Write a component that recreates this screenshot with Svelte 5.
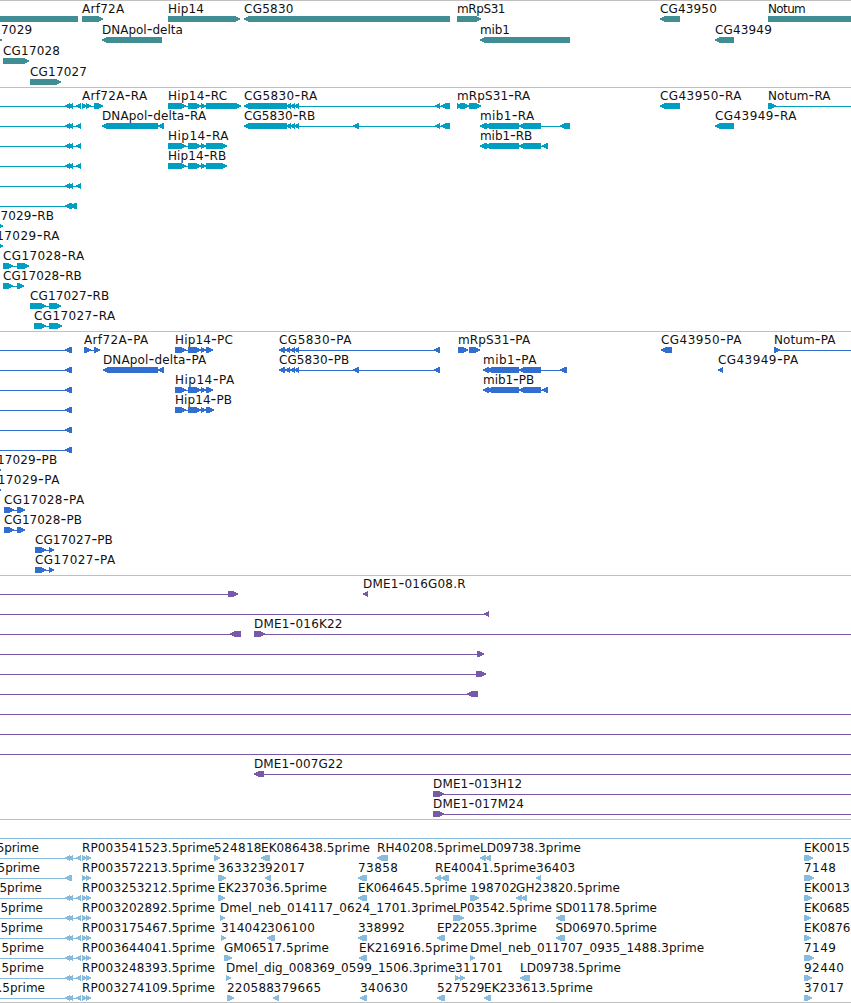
<script>
  // Glyph notation: a-b intron line, a=b plain block, a>b / a<b stranded exon.
  // Labels are [start, text, end].
  const end5 = '65<70 68<73 76<81';
  const est = '0-81 ' + end5 + ' 82>87 86>91';
  const row = (g = '', ...labels) => ({ g, labels });
  const hip = '168-206 168>186 188>201 201>206 ';
  const hipP = '175-206 175>186 188>201 201>206 ';
  const cg = '244-450 244<287 286<291 290<295 294<299 435<440 441<450 ';
  const cgP = '279-440 279<285 285<290 290<295 294<299 434<440 ';
  const mib = '480<487 485<519 519<541 ';
  const mibP = '483<489 487<519 519<541 ';

  const tracks = [
    { name: 'gene', rows: [
      row('0=78 82>103 168>240 244<450 457>481 660<680 768=851', [82, 'Arf72A', 123.7], [168, 'Hip14', 203.3], [244, 'CG5830', 293], [457, 'mRpS31', 505], [660, 'CG43950', 716.3], [768, 'Notum', 805.3]),
      row('-25>2 102<162 480<570 715<734', [-25, 'CG17029', 31.7], [102, 'DNApol-delta', 182.3], [480, 'mib1', 509.3], [715, 'CG43949', 771.3]),
      row('3>29', [3, 'CG17028', 59.5]),
      row('30>61', [30, 'CG17027', 86.5])
    ] },
    { name: 'transcript', rows: [
      row('0-81 ' + end5 + ' 82-94 82>87 86>91 94>103 ' + hip + '206>241 ' + cg + '457>462 460>469 469>481 660<680 768-851 768>776',
        [82, 'Arf72A-RA', 146.7], [168, 'Hip14-RC', 226.7], [244, 'CG5830-RA', 316.7], [457, 'mRpS31-RA', 529.7], [660, 'CG43950-RA', 741], [768, 'Notum-RA', 830]),
      row('0-81 ' + end5 + ' 102<158 158<164 ' + cg + '353<359 541-570 ' + mib + '560<570 715<734',
        [102, 'DNApol-delta-RA', 205.7], [244, 'CG5830-RB', 314.7], [480, 'mib1-RA', 533.7], [715, 'CG43949-RA', 796]),
      row('0-81 ' + end5 + ' ' + hip + '206>227 541-548 ' + mib + '542<548', [168, 'Hip14-RA', 228], [480, 'mib1-RB', 531.7]),
      row('0-81 ' + end5 + ' ' + hip + '206>227', [168, 'Hip14-RB', 225.7]),
      row('0-81 ' + end5),
      row('0-70 65<72 70<77'),
      row('-5>3', [-25, 'CG17029-RB', 53.5]),
      row('-5>3', [-22.5, 'CG17029-RA', 59]),
      row('3-17 3>13 17>29', [3, 'CG17028-RA', 83.7]),
      row('3-17 3>13 17>24', [3, 'CG17028-RB', 81.3]),
      row('30-49 30>46 49>61', [30, 'CG17027-RB', 108.7]),
      row('34-49 34>46 49>62', [34, 'CG17027-RA', 114.7])
    ] },
    { name: 'cds', rows: [
      row('0-66 65<72 84-94 84>91 94>100 ' + hipP + '206>213 ' + cgP + '458>468 469>480 661<672 774-851 774>780',
        [84, 'Arf72A-PA', 147.7], [175, 'Hip14-PC', 232.3], [279, 'CG5830-PA', 351], [458, 'mRpS31-PA', 529.7], [661, 'CG43950-PA', 741], [774, 'Notum-PA', 835]),
      row('0-66 65<72 103<158 158<164 ' + cgP + '353<359 541-567 ' + mibP + '560<567 718<723',
        [103, 'DNApol-delta-PA', 205.7], [279, 'CG5830-PB', 348.7], [483, 'mib1-PA', 536], [718, 'CG43949-PA', 797.7]),
      row('0-66 65<72 ' + hipP + '206>213 541-548 ' + mibP + '542<548', [175, 'Hip14-PA', 233.7], [483, 'mib1-PB', 533.7]),
      row('0-66 65<72 ' + hipP + '206>214', [175, 'Hip14-PB', 231.5]),
      row('0-66 65<72'),
      row('0-66 65<72'),
      row('-4>1', [-21, 'CG17029-PB', 56.7]),
      row('-4>1', [-21, 'CG17029-PA', 59]),
      row('4-17 4>14 17>25', [4, 'CG17028-PA', 83.7]),
      row('4-17 4>14 17>25', [4, 'CG17028-PB', 81.5]),
      row('35-49 35>46 49>54', [35, 'CG17027-PB', 112.3]),
      row('35-49 35>46 49>54', [35, 'CG17027-PA', 114.7])
    ] },
    { name: 'bac', rows: [
      row('0-228 228>238 363<368', [363, 'DME1-016G08.R', 465]),
      row('0-486 484<489'),
      row('0-231 230<241 254-851 254>265', [254, 'DME1-016K22', 342]),
      row('0-477 477>484'),
      row('0-476 476>486'),
      row('0-468 467<478'),
      row('0-851'), row('0-851'), row('0-851'),
      row('254-851 254<264', [254, 'DME1-007G22', 342.7]),
      row('433-851 433>444', [433, 'DME1-013H12', 521.7]),
      row('433-851 433>444', [433, 'DME1-017M24', 523.3])
    ] },
    { name: 'est', rows: [
      row('0-851'),
      row(est + ' 214>220 261<270 377<388 480<486 485<491 804>813', [-3.2, '5prime', 38.3], [82, 'RP003541523.5prime', 214.5], [214, '524818', 261], [261, 'EK086438.5prime', 369.3], [377, 'RH40208.5prime', 479.7], [480, 'LD09738.3prime', 580.3], [804, 'EK0015', 849.5]),
      row('0-66 65<72 82>87 86>91 218>226 265<271 358<367 435<441 441<449 536<541 804>814', [-2.4, '5prime', 39.3], [82, 'RP003572213.5prime', 214.5], [218, '363323', 265], [265, '92017', 304.3], [358, '73858', 397.5], [435, 'RE40041.5prime', 535.7], [536, '36403', 574.7], [804, '7148', 835.5]),
      row(est + ' 218>225 358<367 470>479 516<522 521<527 804>812', [-0.5, '5prime', 41.5], [82, 'RP003253212.5prime', 214.5], [218, 'EK237036.5prime', 326.5], [358, 'EK064645.5prime', 466.5], [470.5, '198702', 516.3], [516, 'GH23820.5prime', 619.5], [804, 'EK0013', 849.5]),
      row(est + ' 220>225 453>464 556<565 804>811', [0.5, '5prime', 42.5], [82, 'RP003202892.5prime', 214.5], [220, 'Dmel_neb_014117_0624_1701.3prime', 453.5], [453, 'LP03542.5prime', 551.3], [555.5, 'SD01178.5prime', 656.5], [804, 'EK0685', 849.5]),
      row(est + ' 221>226 267<275 358<367 437<445 556<565 804>811', [0.5, '5prime', 42.5], [82, 'RP003175467.5prime', 214.5], [221, '314042', 267.5], [267, '306100', 314.3], [358, '338992', 404.5], [437, 'EP22055.3prime', 536.3], [555.5, 'SD06970.5prime', 656.5], [804, 'EK0876', 850]),
      row(est + ' 224>232 359<367 470>475 804>814', [1.5, '5prime', 43.3], [82, 'RP003644041.5prime', 214.5], [224, 'GM06517.5prime', 328.3], [359, 'EK216916.5prime', 467.5], [470, 'Dmel_neb_011707_0935_1488.3prime', 703.7], [804, '7149', 835.5]),
      row(est + ' 226>231 455>460 460>465 520<530 804>812', [1.5, '5prime', 43.3], [82, 'RP003248393.5prime', 214.5], [226, 'Dmel_dig_008369_0599_1506.3prime', 455], [455, '311701', 502.5], [520, 'LD09738.5prime', 620.3], [804, '92440', 843.5]),
      row(est + ' 227>234 273<279 360<367 437<445 484<491 804>812', [-1.5, '.5prime', 44.5], [82, 'RP003274109.5prime', 214.5], [227, '220588', 273.5], [273.5, '379665', 320.7], [360, '340630', 407.5], [437, '527529', 484], [484, 'EK233613.5prime', 592.3], [804, '37017', 843.5])
    ] }
  ];

  function path(glyphs) {
    return glyphs.split(' ').filter(Boolean).map((g) => {
      const [, s, kind, t] = g.match(/^(-?\d+)([-=<>])(\d+)$/);
      const a = +s;
      const b = +t;
      const h = Math.min(5, b - a);
      if (kind === '-') return `M${a} 18H${b}V19H${a}Z`;
      if (kind === '=') return `M${a} 15H${b}V21H${a}Z`;
      if (kind === '>') return `M${a} 15H${b - h}L${b - 2} 16.4L${b} 17.4V18.6L${b - 2} 19.6L${b - h} 21H${a}Z`;
      return `M${a + h} 15H${b}V21H${a + h}L${a + 2} 19.6L${a} 18.6V17.4L${a + 2} 16.4Z`;
    }).join('');
  }
</script>

<main class="browser">
  {#each tracks as track}
    <section class="track {track.name}">
      {#each track.rows as r}
        <svg class="row" width="851">
          <path d={path(r.g)} />
          {#each r.labels as [x, label, end]}
            <text {x} y="12" textLength={end - x + 0.5}>{#each label.split(/(-)/) as part}<tspan class:dash={part === '-'}>{part}</tspan>{/each}</text>
          {/each}
        </svg>
      {/each}
    </section>
  {/each}
</main>

<style>
  :global(body) { background: #fff; overflow: hidden; }
  .browser {
    display: flex;
    flex-direction: column;
    width: 851px;
    height: 1003px;
    box-sizing: border-box;
    border-bottom: 1px solid #c0c0c0;
    overflow: hidden;
  }
  .track {
    display: flex;
    flex-direction: column;
    flex: none;
    border-top: 1px solid #c0c0c0;
    padding-bottom: 3px;
  }
  .row { display: block; height: 20px; flex: none; overflow: visible; }
  .gene { color: #408e93; padding-bottom: 2px; }
  .gene .row { height: 21px; }
  .transcript { color: #009fc1; }
  .cds { color: #316ecf; }
  .bac { color: #7859a8; }
  .est { color: #87bcdf; padding-bottom: 2px; }
  path { fill: currentColor; shape-rendering: crispEdges; }
  text { fill: #111; font: 12px "DejaVu Sans", sans-serif; }
  .dash { font-size: 16px; }
</style>
